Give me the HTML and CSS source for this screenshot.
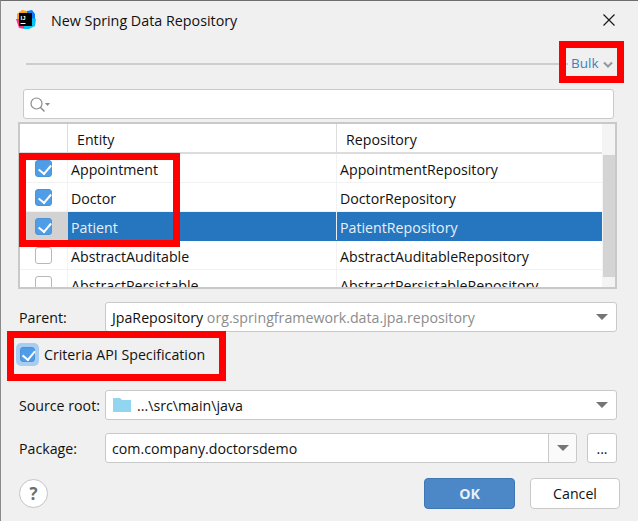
FILE: index.html
```html
<!DOCTYPE html>
<html lang="en">
<head>
    <meta charset="UTF-8">
    <title>New Spring Data Repository</title>
    <link rel="stylesheet" href="styles.css">
</head>
<body>
    <div class="dialog">
        <div class="titlebar">
            <svg class="app-icon" width="20" height="20" viewBox="0 0 20 20">
                <path d="M1 4 L6 0 L11 1 L11 4 L3 4 L3 12 L1 12 Z" fill="#f9a01c"/>
                <path d="M0 9 L3 9 L3 16 L9 16 L9 19 L3 18 Z" fill="#fc318c"/>
                <path d="M11 1 L16 0 L19 4 L19 9 L15 9 L15 3 L11 3 Z" fill="#087cfa"/>
                <path d="M15 8 L20 9 L19 16 L13 19 L8 19 L8 15 L15 15 Z" fill="#07c3f2"/>
                <rect x="3" y="3" width="13" height="13" fill="#000"/>
                <text x="4.5" y="9.5" class="app-icon-text">IJ</text>
                <rect x="4.5" y="13" width="5" height="1" fill="#fff"/>
            </svg>
            <span class="title">New Spring Data Repository</span>
            <svg class="close" width="14" height="14" viewBox="0 0 14 14">
                <path d="M1.5 1.5 L12.5 12.5 M12.5 1.5 L1.5 12.5" stroke="#1a1a1a" stroke-width="1.2" fill="none"/>
            </svg>
        </div>

        <div class="bulk-row">
            <div class="separator"></div>
            <span class="bulk">Bulk</span>
            <svg class="bulk-arrow" width="10" height="7" viewBox="0 0 10 7">
                <path d="M1 1.5 L5 5.5 L9 1.5" stroke="#8f979e" stroke-width="2" fill="none"/>
            </svg>
        </div>

        <div class="search">
            <svg width="21" height="17" viewBox="0 0 21 17">
                <circle cx="6.5" cy="7.5" r="5.5" stroke="#8a8a8a" stroke-width="1.2" fill="none"/>
                <path d="M10.5 11.5 L14.5 15.5" stroke="#8a8a8a" stroke-width="1.5"/>
                <path d="M15 7 L20 7 L17.5 10 Z" fill="#8a8a8a"/>
            </svg>
        </div>

        <div class="table">
            <div class="table-main">
                <div class="row head">
                    <div class="cell check"></div>
                    <div class="cell entity"><span class="head-label">Entity</span></div>
                    <div class="cell repo"><span class="head-label">Repository</span></div>
                </div>
                <div class="row">
                    <div class="cell check"><span class="box on"></span></div>
                    <div class="cell entity">Appointment</div>
                    <div class="cell repo">AppointmentRepository</div>
                </div>
                <div class="row">
                    <div class="cell check"><span class="box on"></span></div>
                    <div class="cell entity">Doctor</div>
                    <div class="cell repo">DoctorRepository</div>
                </div>
                <div class="row selected">
                    <div class="cell check"><span class="box on"></span></div>
                    <div class="cell entity">Patient</div>
                    <div class="cell repo">PatientRepository</div>
                </div>
                <div class="row">
                    <div class="cell check"><span class="box"></span></div>
                    <div class="cell entity">AbstractAuditable</div>
                    <div class="cell repo">AbstractAuditableRepository</div>
                </div>
                <div class="row">
                    <div class="cell check"><span class="box"></span></div>
                    <div class="cell entity">AbstractPersistable</div>
                    <div class="cell repo">AbstractPersistableRepository</div>
                </div>
            </div>
            <div class="scrollbar"><div class="thumb"></div></div>
        </div>

        <div class="form-row parent-row">
            <label class="label">Parent:</label>
            <div class="combo">
                <span>JpaRepository <span class="muted">org.springframework.data.jpa.repository</span></span>
                <span class="arrow"></span>
            </div>
        </div>

        <div class="criteria">
            <span class="focus-ring"><span class="box on"></span></span>
            <span>Criteria API Specification</span>
        </div>

        <div class="form-row source-row">
            <label class="label">Source root:</label>
            <div class="combo">
                <span class="source-value">
                    <svg width="18" height="14" viewBox="0 0 18 14">
                        <path d="M0 0 H7 L9 2 H18 V14 H0 Z" fill="#91d5f0"/>
                    </svg>
                    ...\src\main\java
                </span>
                <span class="arrow"></span>
            </div>
        </div>

        <div class="form-row package-row">
            <label class="label">Package:</label>
            <div class="combo package-combo">
                <span class="package-value">com.company.doctorsdemo</span>
                <span class="arrow-cell"><span class="arrow"></span></span>
            </div>
            <div class="dots">...</div>
        </div>

        <div class="footer">
            <div class="help">?</div>
            <div class="buttons">
                <div class="btn ok">OK</div>
                <div class="btn cancel">Cancel</div>
            </div>
        </div>

        <!-- red annotation boxes drawn over the dialog -->
        <div class="mark mark-bulk"></div>
        <div class="mark mark-rows"></div>
        <div class="mark mark-criteria"></div>
    </div>
</body>
</html>
```

FILE: styles.css
```css
* {
    box-sizing: border-box;
}
html, body {
    margin: 0;
    height: 100%;
}
body {
    font-family: "Open Sans", "Liberation Sans", sans-serif;
    font-size: 14.2px;
    color: #111;
    background-color: #f0f0f0;
    overflow: hidden;
}
.dialog {
    position: relative;
    width: 638px;
    height: 521px;
    border-top: 1px solid #6e6e6e;
    border-left: 1px solid #8a8a8a;
    background-color: #f0f0f0;
}

.titlebar {
    display: flex;
    align-items: center;
    height: 38px;
    padding: 0 22px 0 15px;
}
.app-icon {
    flex: none;
}
.app-icon-text {
    font-family: "Liberation Sans", sans-serif;
    font-size: 6px;
    font-weight: bold;
    fill: #fff;
}
.title {
    margin-left: 15px;
    font-size: 14.3px;
    flex: 1;
}

.bulk-row {
    display: flex;
    align-items: center;
    height: 50px;
    padding-left: 25px;
}
.separator {
    width: 542px;
    height: 2px;
    background-color: #cdcdcd;
}
.bulk {
    margin: 0 0 2px 3px;
    font-size: 13.5px;
    color: #3f7fc4;
}
.bulk-arrow {
    margin-left: 4px;
}

.search {
    display: flex;
    align-items: center;
    width: 591px;
    height: 30px;
    margin-left: 22px;
    padding-left: 6px;
    background-color: #fff;
    border: 1px solid #c9c9c9;
    border-radius: 3px;
}

.table {
    display: flex;
    width: 599px;
    height: 167px;
    margin: 3px 0 0 17px;
    border: 2px solid #c9c9c9;
    background-color: #fff;
    overflow: hidden;
}
.table-main {
    width: 582px;
    flex: none;
    overflow: hidden;
}
.row {
    display: flex;
    height: 29px;
    border-bottom: 1px solid #f2f2f2;
}
.row.head {
    height: 30px;
    border-bottom: 2px solid #dcdcdc;
}
.cell {
    display: flex;
    align-items: center;
    padding: 2px 0 0 3px;
    border-right: 1px solid #f2f2f2;
    white-space: nowrap;
}
.cell.check {
    width: 48px;
    justify-content: center;
    padding: 1px 0 0;
}
.cell.entity {
    width: 269px;
}
.cell.repo {
    flex: 1;
    border-right: none;
}
.head .cell {
    padding: 3px 0 0 3px;
}
.head-label {
    padding-left: 6px;
}
.head .cell.check,
.head .cell.entity {
    border-right: 1px solid #dcdcdc;
}
.row.selected {
    background-color: #2675bf;
    color: #e6f0fa;
    border-bottom-color: #2675bf;
}
.row.selected .cell {
    border-right-color: #e6f0fa;
}
.row.selected .cell.check {
    background-color: #d2d2d2;
    border-right-color: #d2d2d2;
}
.scrollbar {
    flex: 1;
    padding: 31px 0 0 1px;
    background-color: #f4f4f4;
}
.thumb {
    height: 122px;
    background-color: #d4d4d4;
}

.box {
    position: relative;
    display: block;
    width: 17px;
    height: 17px;
    background-color: #fff;
    border: 1px solid #b8b8b8;
    border-radius: 3px;
}
.box.on {
    background-color: #4f9de6;
    border-color: #4a94d8;
}
.box.on::after {
    content: "";
    position: absolute;
    left: 5px;
    top: 1px;
    width: 5.5px;
    height: 10px;
    border: solid #fff;
    border-width: 0 2.5px 2.5px 0;
    transform: rotate(40deg);
}

.form-row {
    display: flex;
    align-items: center;
    padding-left: 18px;
}
.label {
    width: 86px;
    flex: none;
}
.parent-row {
    margin-top: 13px;
}
.combo {
    display: flex;
    align-items: center;
    justify-content: space-between;
    width: 512px;
    height: 30px;
    padding: 0 8px 0 6px;
    background-color: #fff;
    border: 1px solid #c9c9c9;
    border-radius: 3px;
    white-space: nowrap;
}
.muted {
    color: #8c8c8c;
}
.arrow {
    display: block;
    width: 0;
    height: 0;
    border-left: 6px solid transparent;
    border-right: 6px solid transparent;
    border-top: 6px solid #757575;
}

.criteria {
    display: flex;
    align-items: center;
    height: 25px;
    margin: 10px 0 0 15px;
}
.focus-ring {
    display: block;
    padding: 4px;
    margin-right: 5px;
    background-color: #a9cdf2;
    border-radius: 5px;
}
.focus-ring .box {
    width: 15px;
    height: 15px;
}
.focus-ring .box.on::after {
    left: 4px;
    top: 0;
    height: 9.5px;
}

.source-row {
    margin-top: 23px;
}
.source-value {
    display: flex;
    align-items: center;
    gap: 6px;
}
.source-value svg {
    margin-left: 1px;
}
.package-row {
    margin-top: 13px;
}
.package-combo {
    width: 472px;
    padding: 0 0 0 6px;
}
.package-value {
    flex: 1;
}
.arrow-cell {
    display: flex;
    align-items: center;
    justify-content: center;
    width: 28px;
    height: 100%;
    background-color: #fafafa;
    border-left: 1px solid #c9c9c9;
    border-radius: 0 3px 3px 0;
}
.dots {
    display: flex;
    align-items: flex-end;
    justify-content: center;
    width: 30px;
    height: 30px;
    margin-left: 10px;
    padding-bottom: 6px;
    background-color: #fff;
    border: 1px solid #c9c9c9;
    border-radius: 3px;
    line-height: 1;
}

.footer {
    display: flex;
    align-items: center;
    justify-content: space-between;
    margin-top: 15px;
    padding: 0 18px 0 18px;
}
.help {
    display: flex;
    align-items: center;
    justify-content: center;
    width: 29px;
    height: 29px;
    background-color: #fff;
    border: 1px solid #c4c4c4;
    border-radius: 50%;
    color: #6e6e6e;
    font-size: 17px;
    font-weight: bold;
}
.buttons {
    display: flex;
    gap: 15px;
}
.btn {
    display: flex;
    align-items: center;
    justify-content: center;
    height: 31px;
    border-radius: 4px;
}
.ok {
    width: 91px;
    background-color: #4c87c8;
    border: 1px solid #3f77b5;
    color: #e8f1fa;
    font-weight: bold;
}
.cancel {
    width: 90px;
    background-color: #fff;
    border: 1px solid #c9c9c9;
}

.mark {
    position: absolute;
    border: 7px solid #ff0000;
    pointer-events: none;
}
.mark-bulk {
    left: 558px;
    top: 40px;
    width: 65px;
    height: 42px;
}
.mark-rows {
    left: 18px;
    top: 152px;
    width: 161px;
    height: 94px;
}
.mark-criteria {
    left: 6px;
    top: 330px;
    width: 219px;
    height: 50px;
}
```
